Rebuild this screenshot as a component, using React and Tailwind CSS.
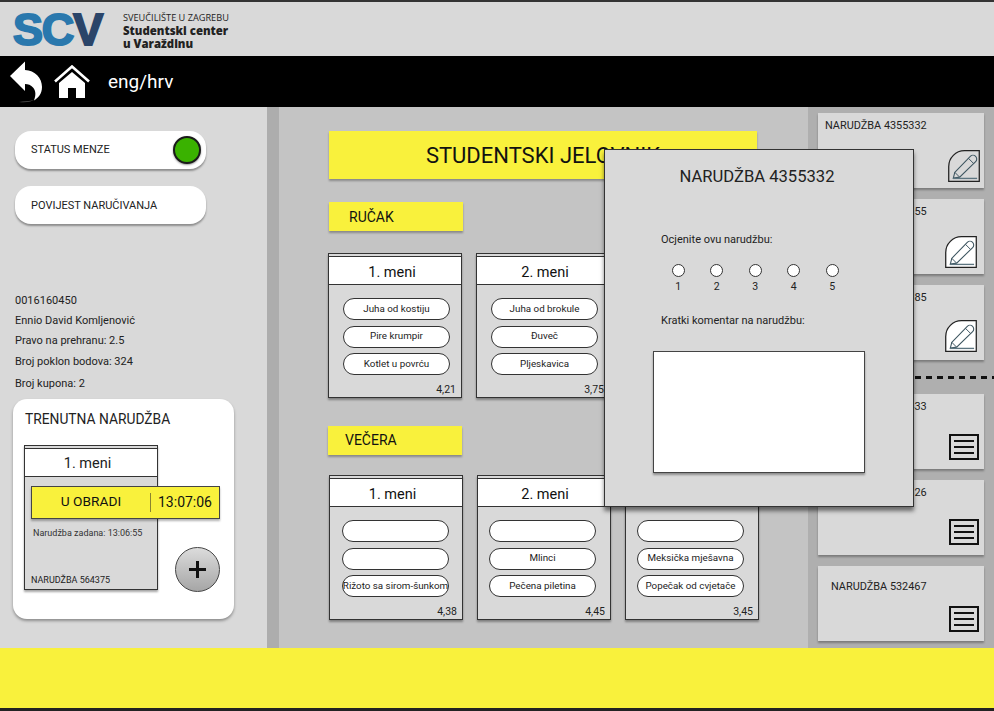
import React from 'react';

const roboto = "font-['Roboto',sans-serif]";

/* ── Icons ── */
const BackIcon = () => (
  <svg width="34" height="42" viewBox="0 0 34 42" className="shrink-0">
    <path
      d="M1 15 L16 0.500 L16 9 C26 9.500 33 17 33 26 C33 33 29 37 25 39.500 C27 34 27 30 24 26.500 C22 24 19 23 16 23 L16 30 Z"
      fill="#fff"
    />
    <path d="M10 41 C17 42 23 40.500 25 39 C21 40 15 40.500 10 41 Z" fill="#555" />
  </svg>
);

const HomeIcon = () => (
  <svg width="36" height="34" viewBox="0 0 36 34" className="shrink-0">
    <path d="M1 16.500 L18 1.500 L35 16.500" fill="none" stroke="#fff" strokeWidth="2.600" />
    <path d="M5 18 L18 7 L31 18 L31 33 L22 33 L22 23 L14 23 L14 33 L5 33 Z" fill="#fff" />
  </svg>
);

const PencilIcon = ({ fill }) => (
  <svg width="32" height="32" viewBox="0 0 33 33" className="block">
    <path d="M0.750 32.250 L0.750 17 C0.750 8 8 0.750 17 0.750 L32.250 0.750 L32.250 32.250 Z" fill={fill} stroke="#222" strokeWidth="1.300" />
    <path d="M7 23 L23 6.500 C24.500 5 27 5 28.500 6.500 C30 8 30 10.500 28.500 12 L12 28 L5.500 29 Z" fill="none" stroke="#3d5560" strokeWidth="1.100" />
    <path d="M21 8.500 L26.500 14 M7 23 L12 28" fill="none" stroke="#3d5560" strokeWidth="1" />
    <path d="M5 29.300 L30 29.300" stroke="#5d7580" strokeWidth="1.400" />
  </svg>
);

const ListIcon = () => (
  <div className="w-[30px] h-[26px] border-2 border-[#111] flex flex-col justify-center gap-[4px] px-[3px]">
    <div className="h-[2px] bg-[#111]" />
    <div className="h-[2px] bg-[#111]" />
    <div className="h-[2px] bg-[#111]" />
  </div>
);

/* ── Menu card ── */
const MenuCard = ({ title, titleClass = '', items, price, pillClass = 'pl-[14px]' }) => (
  <div className="w-[134px] h-[145px] bg-[#d9d9d9] border border-[#333] shadow-[0_2px_2px_rgba(0,0,0,0.35)] flex flex-col">
    <div className="h-[2px] shrink-0" />
    <div className={`h-[29px] shrink-0 pt-[4px] bg-white border-y border-[#333] flex items-center justify-center text-[14.500px] text-[#111] ${titleClass}`}>
      {title}
    </div>
    <div className={`flex flex-col gap-[5.500px] items-start mt-[13px] ${pillClass}`}>
      {items.map((item, i) => (
        <div
          key={i}
          className="w-[107px] h-[22px] rounded-full bg-white border border-[#333] flex items-center justify-center text-[9.800px] text-[#222] whitespace-nowrap"
        >
          {item}
        </div>
      ))}
    </div>
    <div className="mt-auto pr-[5px] text-right text-[10.500px] leading-[14px] text-[#222]">{price}</div>
  </div>
);

const YellowLabel = ({ children, pad }) => (
  <div className={`w-[134px] h-[29px] bg-[#f9f13c] shadow-[0_2px_2px_rgba(0,0,0,0.3)] flex items-center ${pad} text-[14px] text-[#111]`}>
    {children}
  </div>
);

/* ── Right column card ── */
const OrderCard = ({ label, children, iconClass, labelClass = 'pl-[7px] pt-[6px]' }) => (
  <div className="w-[166px] h-[75px] bg-[#d9d9d9] shadow-[0_2px_2px_rgba(0,0,0,0.3)] relative">
    <div className={`${labelClass} text-[10.900px] leading-[14px] text-[#222]`}>{label}</div>
    <div className={`absolute ${iconClass}`}>{children}</div>
  </div>
);

const Rating = ({ n }) => (
  <div className="w-[38.500px] flex flex-col items-center">
    <div className="w-[13px] h-[13px] rounded-full bg-white border border-[#333]" />
    <span className="text-[10.500px] leading-[14px] mt-[3px] text-[#222]">{n}</span>
  </div>
);

export default function App() {
  return (
    <div className={`${roboto} relative w-[994px] h-[711px] overflow-hidden bg-[#d9d9d9] flex flex-col`}>
      {/* Top header */}
      <header className="h-[56px] shrink-0 border-t-2 border-[#333] flex items-center pl-[13px]">
        <div className="w-[92px] h-[40px] flex items-center font-['Liberation_Sans',sans-serif] font-bold text-[45px] tracking-[-1.200px] leading-none [-webkit-text-stroke:2px_currentColor]">
          <span className="text-[#2a78ad]">SC</span>
          <span className="text-[#2b4569]">V</span>
        </div>
        <div className="ml-[18px] mt-[3px] text-[#222] font-['Open_Sans',sans-serif]">
          <div className="text-[9.200px] leading-[12px]">SVEUČILIŠTE U ZAGREBU</div>
          <div className="text-[11.400px] leading-[13px] font-extrabold">Studentski center</div>
          <div className="text-[11.400px] leading-[13px] font-extrabold">u Varaždinu</div>
        </div>
      </header>

      {/* Nav bar */}
      <nav className="h-[51px] shrink-0 bg-black flex items-center pl-[9px]">
        <BackIcon />
        <div className="ml-[11px]">
          <HomeIcon />
        </div>
        <span className="ml-[18px] mt-[1px] text-[19px] text-white">eng/hrv</span>
      </nav>

      {/* Body */}
      <div className="flex h-[541px] shrink-0">
        {/* Sidebar */}
        <aside className="w-[267px] shrink-0 bg-[#d9d9d9] pt-[24px] pl-[15px] flex flex-col">
          <div className="w-[191px] h-[38px] rounded-[16px] bg-white shadow-[0_2px_2px_rgba(0,0,0,0.35)] flex items-center justify-between pl-[16px] pr-[5px] text-[11px] text-[#222]">
            <span>STATUS MENZE</span>
            <div className="w-[28px] h-[28px] rounded-full bg-[#3ab200] border-2 border-[#1a1a1a] shadow-[0_1px_2px_rgba(0,0,0,0.4)]" />
          </div>
          <div className="w-[191px] h-[38px] mt-[17px] rounded-[16px] bg-white shadow-[0_2px_2px_rgba(0,0,0,0.35)] flex items-center pl-[16px] text-[11px] text-[#222]">
            <span className="mt-[2px]">POVIJEST NARUČIVANJA</span>
          </div>

          <div className="mt-[70px] text-[11px] text-[#222] flex flex-col">
            <div className="h-[20px] leading-[14px]">0016160450</div>
            <div className="h-[20px] leading-[14px]">Ennio David Komljenović</div>
            <div className="h-[21px] leading-[14px]">Pravo na prehranu: 2.5</div>
            <div className="h-[22px] leading-[14px]">Broj poklon bodova: 324</div>
            <div className="h-[16px] leading-[14px]">Broj kupona: 2</div>
          </div>

          {/* Current order */}
          <div className="relative ml-[-2px] mt-[6px] w-[221px] h-[220px] rounded-[14px] bg-white shadow-[0_2px_3px_rgba(0,0,0,0.35)] pt-[12px] pl-[11px]">
            <div className="pl-[1px] text-[13.800px] leading-[16px] text-[#222]">TRENUTNA NARUDŽBA</div>
            <div className="mt-[18px] w-[134px] h-[145px] bg-[#d9d9d9] border border-[#333] shadow-[0_2px_2px_rgba(0,0,0,0.35)] flex flex-col">
              <div className="h-[2px] shrink-0" />
              <div className="h-[29px] shrink-0 pt-[3px] pr-[7px] bg-white border-y border-[#333] flex items-center justify-center text-[14.500px] text-[#222]">
                1. meni
              </div>
              <div className="mt-[50px] pl-[8px] text-[9px] leading-[12px] text-[#333]">Narudžba zadana: 13:06:55</div>
              <div className="mt-auto pl-[6px] pb-[3px] text-[9px] leading-[12px] text-[#222]">NARUDŽBA 564375</div>
            </div>
            {/* status strip over the card */}
            <div className="absolute left-[18px] top-[87px] w-[189px] h-[33px] bg-[#f9f13c] border border-[#444] shadow-[0_2px_2px_rgba(0,0,0,0.3)] flex items-center text-[#111]">
              <span className="w-[118px] text-center text-[13.700px] mt-[-2px]">U OBRADI</span>
              <div className="w-px h-[19px] bg-[#8a8430]" />
              <span className="flex-1 text-center text-[14px]">13:07:06</span>
            </div>
            {/* add button */}
            <div className="absolute left-[162px] top-[148px] w-[45px] h-[45px] rounded-full border border-[#444] bg-linear-to-b from-[#dcdcdc] to-[#a6a6a6] flex items-center justify-center">
              <svg width="21" height="21" viewBox="0 0 21 21">
                <path d="M10.500 2 V19 M2 10.500 H19" stroke="#111" strokeWidth="3" />
              </svg>
            </div>
          </div>
        </aside>

        <div className="w-[12px] shrink-0 bg-[#adadad]" />

        {/* Center column */}
        <main className="w-[529px] shrink-0 bg-[#c4c4c4] pt-[24px] pl-[49px]">
          <div className="w-[428px] h-[48px] ml-[1px] bg-[#f9f13c] shadow-[0_2px_2px_rgba(0,0,0,0.3)] flex items-center justify-center text-[22px] text-[#111]">
            STUDENTSKI JELOVNIK
          </div>
          <div className="mt-[23px] ml-[1px]">
            <YellowLabel pad="pl-[20px] pt-[1px]">RUČAK</YellowLabel>
          </div>
          <div className="flex gap-[14px] mt-[22px]">
            <MenuCard title="1. meni" titleClass="pr-[6px]" items={['Juha od kostiju', 'Pire krumpir', 'Kotlet u povrću']} price="4,21" />
            <MenuCard title="2. meni" titleClass="pl-[4px]" items={['Juha od brokule', 'Đuveč', 'Pljeskavica']} price="3,75" />
            <MenuCard title="3. meni" items={['', '', '']} price="" />
          </div>
          <div className="mt-[28px]">
            <YellowLabel pad="pl-[17px]">VEČERA</YellowLabel>
          </div>
          <div className="flex gap-[14px] mt-[20px] ml-[1px]">
            <MenuCard title="1. meni" titleClass="pr-[7px]" pillClass="pl-[12px]" items={['', '', 'Rižoto sa sirom-šunkom']} price="4,38" />
            <MenuCard title="2. meni" titleClass="pl-[2px]" pillClass="pl-[11px]" items={['', 'Mlinci', 'Pečena piletina']} price="4,45" />
            <MenuCard title="3. meni" pillClass="pl-[11px]" items={['', 'Meksička mješavna', 'Popečak od cvjetače']} price="3,45" />
          </div>
        </main>

        {/* Right column */}
        <section className="flex-1 bg-[#afafaf] pt-[6px] pl-[10px] flex flex-col">
          <div className="flex flex-col gap-[11px]">
            <OrderCard label="NARUDŽBA 4355332" iconClass="left-[130px] top-[37px]">
              <PencilIcon fill="#d9d9d9" />
            </OrderCard>
            <OrderCard label="NARUDŽBA 4355355" iconClass="left-[127px] top-[37px]">
              <PencilIcon fill="#fff" />
            </OrderCard>
            <OrderCard label="NARUDŽBA 4355385" iconClass="left-[127px] top-[35px]">
              <PencilIcon fill="#fff" />
            </OrderCard>
          </div>
          <div className="mt-[16px] ml-[-10px] w-[186px] h-[3px] bg-[repeating-linear-gradient(90deg,#111_0_6px,transparent_6px_11px)] [background-position:8px_0]" />
          <div className="mt-[15px] flex flex-col gap-[11px]">
            <OrderCard label="NARUDŽBA 4355433" iconClass="left-[131px] top-[40px]">
              <ListIcon />
            </OrderCard>
            <OrderCard label="NARUDŽBA 4355326" iconClass="left-[131px] top-[39px]">
              <ListIcon />
            </OrderCard>
            <OrderCard label="NARUDŽBA 532467" labelClass="pl-[13px] pt-[14px]" iconClass="left-[131px] top-[40px]">
              <ListIcon />
            </OrderCard>
          </div>
        </section>
      </div>

      {/* Footer */}
      <footer className="h-[60px] shrink-0 bg-[#f9f13c]" />
      <div className="h-[3px] shrink-0 bg-[#222]" />

      {/* Rating modal */}
      <div className="absolute left-[604px] top-[149px] w-[310px] h-[358px] bg-[#d9d9d9] border border-[#333] shadow-[0_4px_4px_rgba(0,0,0,0.5)] flex flex-col">
        <div className="mt-[17px] ml-[-4px] text-center text-[16.600px] leading-[20px] text-[#222]">NARUDŽBA 4355332</div>
        <div className="mt-[46px] ml-[56px] text-[11px] leading-[14px] text-[#222]">Ocjenite ovu narudžbu:</div>
        <div className="mt-[17px] ml-[54px] flex">
          {[1, 2, 3, 4, 5].map((n) => (
            <Rating key={n} n={n} />
          ))}
        </div>
        <div className="mt-[20px] ml-[56px] text-[11px] leading-[14px] text-[#222]">Kratki komentar na narudžbu:</div>
        <div className="mt-[23px] ml-[48px] w-[212px] h-[122px] bg-white border border-[#444] shadow-[0_2px_2px_rgba(0,0,0,0.35)]" />
      </div>
    </div>
  );
}
